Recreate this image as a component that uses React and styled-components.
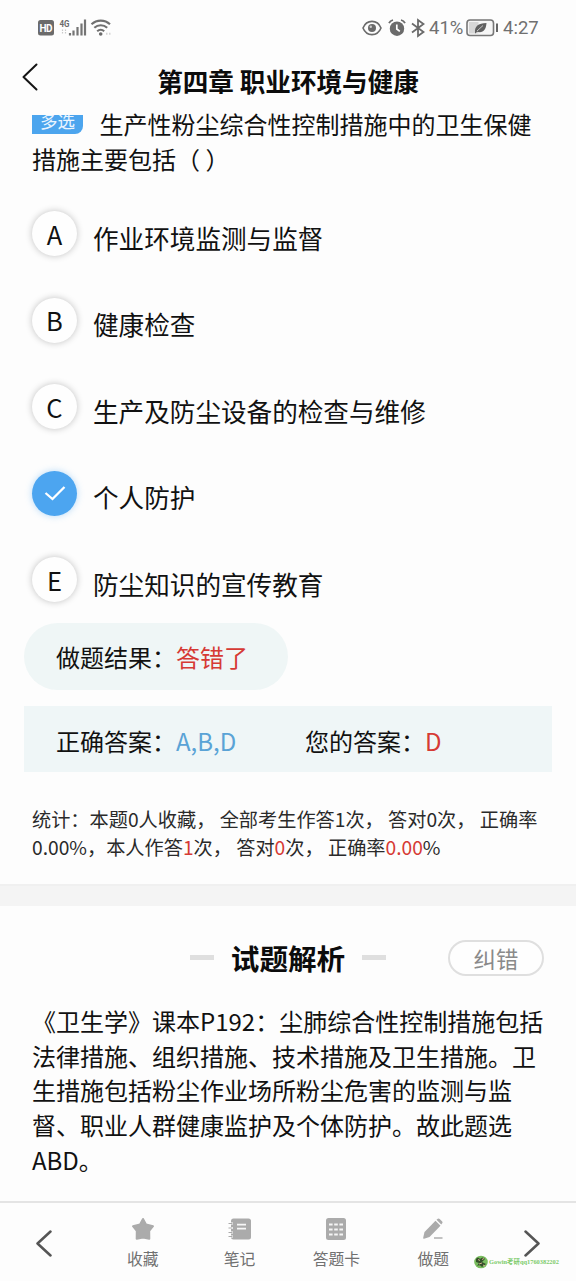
import React from "react";
import styled, { createGlobalStyle } from "styled-components";

const Global = createGlobalStyle`
  * { box-sizing: border-box; }
  body {
    margin: 0;
    background: #fdfdfd;
    color: #111;
    font-family: "Noto Sans CJK SC", sans-serif;
    text-spacing-trim: space-all;
  }
  svg { display: block; flex: none; }
`;

const Screen = styled.div`
  width: 576px;
  height: 1281px;
  display: flex;
  flex-direction: column;
  overflow: hidden;
  background: #fdfdfd;
`;

const StatusBar = styled.div`
  height: 56px;
  padding: 0 38px 0 38px;
  display: flex;
  justify-content: space-between;
  align-items: center;
  color: #707070;
`;

const StatusGroup = styled.div`
  display: flex;
  align-items: center;
  font: 400 18.5px/22px Roboto, sans-serif;
`;

const StatusText = styled.span`
  margin-left: ${(p) => p.$gap}px;
  width: ${(p) => p.$w}px;
  white-space: nowrap;
`;

const Header = styled.header`
  height: 51px;
  flex: none;
  padding: 0 22px;
  display: grid;
  grid-template-columns: 20px 1fr 20px;
  align-items: start;
`;

const BackButton = styled.button`
  border: 0;
  padding: 7px 0 0;
  background: none;
`;

const Title = styled.h1`
  margin: 6px 0 0;
  font-size: 25.6px;
  line-height: 37px;
  font-weight: 700;
  text-align: center;
  white-space: nowrap;
  color: #0c0c0c;
`;

const Content = styled.main`
  height: 1094px;
  display: flex;
  flex-direction: column;
`;

const Question = styled.div`
  padding-left: 32px;
  height: 83.5px;
  flex: none;
  font-size: 24px;
  line-height: 34.5px;
  white-space: nowrap;
`;

const QuestionLine = styled.div`
  display: flex;
  height: 34.5px;
`;

const Badge = styled.span`
  width: 51px;
  height: 27px;
  margin-right: 16.5px;
  background: #4ca5ee;
  color: #eaf5ff;
  border-radius: 8px 0 8px 0;
  font-size: 17.5px;
  line-height: 28px;
  text-align: center;
  clip-path: inset(8px 0 0 0);
`;

const Options = styled.div`
  display: flex;
  flex-direction: column;
  flex: none;
`;

const Option = styled.div`
  height: 86.5px;
  padding-left: 32px;
  display: flex;
  align-items: center;
`;

const Circle = styled.span`
  width: 45px;
  height: 45px;
  border-radius: 50%;
  display: flex;
  align-items: center;
  justify-content: center;
  font-size: 25.5px;
  line-height: 45px;
  padding-bottom: 1px;
  background: ${(p) => (p.$on ? "#4ca5f0" : "#fefefe")};
  box-shadow: 0 0 7px ${(p) => (p.$on ? "rgba(76,165,240,.4)" : "rgba(0,0,0,.24)")};
`;

const OptionText = styled.span`
  margin: 8px 0 0 16px;
  font-size: 25.6px;
  line-height: 38px;
`;

const ResultPill = styled.div`
  margin-left: 24px;
  width: 264px;
  height: 67px;
  flex: none;
  padding-left: 32px;
  border-radius: 34px;
  background: #eff6f6;
  font-size: 24px;
  line-height: 68px;
`;

const AnswerBar = styled.div`
  margin: 16px 24px 0;
  height: 66px;
  flex: none;
  padding-left: 32px;
  display: flex;
  background: #eff6f7;
  font-size: 24px;
  line-height: 69px;
`;

const AnswerCell = styled.div`
  width: 249px;
`;

const Mark = styled.span`
  color: ${(p) => (p.$blue ? "#5aa3d6" : "#d63a34")};
`;

const Stats = styled.div`
  height: 112px;
  flex: none;
  padding: 34px 0 0 32px;
  font-size: 19.2px;
  line-height: 27.8px;
  white-space: pre;
  color: #2a2a2a;
`;

const Band = styled.div`
  height: 21.5px;
  flex: none;
  background: #f4f4f4;
  border-top: 2px solid #f0f0f0;
`;

const AnalysisHead = styled.div`
  height: 98.5px;
  flex: none;
  padding: 6px 32px 0;
  display: grid;
  grid-template-columns: 96px 1fr 96px;
  align-items: center;
`;

const AnalysisTitle = styled.h2`
  grid-column: 2;
  margin: 0;
  display: flex;
  align-items: center;
  justify-content: center;
  gap: 17px;
  font-size: 28.6px;
  line-height: 40px;
  font-weight: 700;
  color: #0c0c0c;
`;

const Dash = styled.span`
  width: 24px;
  height: 5px;
  background: #dfdfdf;
`;

const FixButton = styled.button`
  height: 36px;
  padding: 0;
  border: 2px solid #dfdfdf;
  border-radius: 18px;
  background: #fefefe;
  color: #8a8a8a;
  font: 400 22.4px/32px "Noto Sans CJK SC", sans-serif;
`;

const Analysis = styled.div`
  padding-left: 32px;
  font-size: 24px;
  line-height: 34.7px;
  white-space: nowrap;
`;

const Footer = styled.footer`
  height: 80px;
  flex: none;
  position: relative;
  border-top: 2px solid #e4e4e4;
  padding: 3px 36px 0;
  display: flex;
  align-items: center;
  justify-content: space-between;
`;

const Tabs = styled.nav`
  display: grid;
  grid-template-columns: repeat(4, 96.8px);
`;

const Tab = styled.div`
  display: flex;
  flex-direction: column;
  align-items: center;
  gap: 6px;
  padding-top: 1px;
  color: #707070;
  font-size: 15.8px;
  line-height: 24px;
`;

const Watermark = styled.div`
  position: absolute;
  left: 474px;
  top: 52px;
  display: flex;
  align-items: center;
  gap: 1px;
  color: #7ccb69;
  font: 700 6.4px/14px "Liberation Serif", "Noto Sans CJK SC", serif;
  white-space: nowrap;
`;

const Chevron = ({ w, h, right, color, sw }) => (
  <svg width={w} height={h} viewBox={`0 0 ${w} ${h}`} fill="none" stroke={color} strokeWidth={sw} strokeLinecap="round" strokeLinejoin="round">
    <path d={right ? `M1.5 1.5L${w - 1.5} ${h / 2}L1.5 ${h - 1.5}` : `M${w - 1.5} 1.5L1.5 ${h / 2}L${w - 1.5} ${h - 1.5}`} />
  </svg>
);

const SignalIcons = () => (
  <svg width="76" height="22" viewBox="0 0 76 22">
    <rect x="0" y="3" width="16" height="15.5" rx="2.5" fill="#6b6b6b" />
    <text x="8" y="14.8" textAnchor="middle" fontFamily="Roboto, sans-serif" fontWeight="700" fontSize="10" textLength="13" fill="#fff">HD</text>
    <text x="21.5" y="9.8" fontFamily="Roboto, sans-serif" fontWeight="700" fontSize="9" textLength="10" lengthAdjust="spacingAndGlyphs" fill="#6b6b6b">4G</text>
    <path d="M24.5 12.5v5M27.5 12.5v5" stroke="#c9c9c9" strokeWidth="1.2" strokeDasharray="1.5 1" />
    <path d="M32 16v2.5M35.5 13.5v5M39.5 10v8.5M43.5 6.5v12M47 2.5v16" stroke="#747474" strokeWidth="2.2" />
    <g fill="none" stroke="#707070" strokeWidth="2.1">
      <path d="M53.5 7.3a13.5 13.5 0 0 1 18.5 0" />
      <path d="M56.3 10.8a9.4 9.4 0 0 1 12.9 0" />
      <path d="M59.2 14.2a5.2 5.2 0 0 1 7 0" />
    </g>
    <circle cx="62.7" cy="17" r="1.8" fill="#6b6b6b" />
    <path d="M68 16.8h1.5M71 16.8h1.5" stroke="#d3d3d3" strokeWidth="2" />
  </svg>
);

const EyeIcon = () => (
  <svg width="20" height="22" viewBox="0 0 20 22" fill="none" stroke="#6b6b6b" strokeWidth="1.6">
    <path d="M1 11C4.5 2.2 15.5 2.2 19 11C15.5 19.8 4.5 19.8 1 11Z" />
    <circle cx="10" cy="11" r="4" fill="#6b6b6b" stroke="none" />
    <circle cx="8.8" cy="9.8" r="1.2" fill="#ccc" stroke="none" />
  </svg>
);

const AlarmIcon = () => (
  <svg width="18" height="22" viewBox="0 0 18 22">
    <circle cx="9" cy="11.7" r="7.2" fill="#6b6b6b" />
    <path d="M1 6.2Q2.2 3.7 5 3M17 6.2Q15.8 3.7 13 3" fill="none" stroke="#6b6b6b" strokeWidth="1.8" />
    <path d="M8.8 7.5V12L11.8 14.4" fill="none" stroke="#fff" strokeWidth="1.7" />
  </svg>
);

const BluetoothIcon = () => (
  <svg width="14" height="22" viewBox="0 0 14 22" fill="none" stroke="#6b6b6b" strokeWidth="1.8">
    <path d="M1 6.5L12.5 15L7 19V3L12.5 7L1 15.5" />
  </svg>
);

const BatteryIcon = () => (
  <svg width="33" height="22" viewBox="0 0 33 22">
    <rect x="1" y="3" width="26.5" height="15.5" rx="3" fill="#f6f6f6" stroke="#777" strokeWidth="1.6" />
    <rect x="3" y="5" width="9.5" height="11.5" fill="#d7d7d7" />
    <path d="M9 16C8.5 9 12 6.5 20.5 6C20 13 17 16.5 11 14.8L9.5 16.5Z" fill="#606060" />
    <path d="M11 14L17 8.5" stroke="#ddd" strokeWidth=".8" />
    <path d="M31 6.5v8.5" stroke="#666" strokeWidth="2" />
  </svg>
);

const tabIcons = {
  star: (
    <svg width="24" height="24" viewBox="0 0 24 24" fill="#ababab" stroke="#ababab" strokeWidth="2" strokeLinejoin="round">
      <path d="M12 2L15 7.5L22 9.2L18.2 14L18.3 21.7L12 20.5L5.7 21.7L5.8 14L2 9.2L9 7.5Z" />
    </svg>
  ),
  note: (
    <svg width="24" height="24" viewBox="0 0 24 24">
      <rect x="3" y="1.5" width="20" height="21" rx="2.5" fill="#ababab" />
      <path d="M1 6.5h4M1 11h4M1 15.5h4M1 19.5h4" stroke="#fdfdfd" strokeWidth="2.2" />
      <path d="M0.5 6.5h4M0.5 11h4M0.5 15.5h4M0.5 19.5h4" stroke="#ababab" strokeWidth="1.2" />
      <path d="M9 7.7h9M9 11.7h9" stroke="#f7f7f7" strokeWidth="1.7" />
    </svg>
  ),
  card: (
    <svg width="24" height="24" viewBox="0 0 24 24">
      <rect x="2" y="1" width="20" height="22" rx="2.5" fill="#ababab" />
      <path d="M5 7.5h14M5 12.5h14M5 17.5h14" stroke="#f5f5f5" strokeWidth="1.9" strokeDasharray="3.6 1.6" />
    </svg>
  ),
  pencil: (
    <svg width="24" height="24" viewBox="0 0 24 24" fill="#ababab">
      <path d="M3.5 15L14.5 3.8L19.5 8.8L8.5 20L3 21.8Q2 22 2.2 20.8Z" />
      <path d="M15.5 2.8L16.8 1.7Q17.8 1 18.7 1.9L21.2 4.5Q22 5.4 21.2 6.3L20.2 7.5Z" />
      <rect x="13" y="20" width="8.5" height="2" fill="#c2c2c2" />
    </svg>
  ),
};

const WatermarkLogo = () => (
  <svg width="14" height="14" viewBox="0 0 14 14">
    <ellipse cx="7" cy="7" rx="6.8" ry="6.3" fill="#79bd5e" />
    <path d="M2 4Q4 1 6 4Q9 1 11 4L8 7L12 9L8 12Q6 9 3 11L5 8L2 7Z" fill="#34502b" />
    <path d="M4 4.5l2 1M8 4.5l2-1M5 9l3-1M9 10l2 1" stroke="#d5b08c" strokeWidth="1" />
  </svg>
);

const options = [
  ["A", "作业环境监测与监督"],
  ["B", "健康检查"],
  ["C", "生产及防尘设备的检查与维修"],
  ["D", "个人防护", true],
  ["E", "防尘知识的宣传教育"],
];

const analysis = [
  "《卫生学》课本P192：尘肺综合性控制措施包括",
  "法律措施、组织措施、技术措施及卫生措施。卫",
  "生措施包括粉尘作业场所粉尘危害的监测与监",
  "督、职业人群健康监护及个体防护。故此题选",
  "ABD。",
];

const tabs = [
  ["star", "收藏"],
  ["note", "笔记"],
  ["card", "答题卡"],
  ["pencil", "做题"],
];

export default function App() {
  return (
    <>
      <Global />
      <Screen>
        <StatusBar>
          <SignalIcons />
          <StatusGroup>
            <EyeIcon />
            <StatusText $gap={6} $w={18}><AlarmIcon /></StatusText>
            <StatusText $gap={5} $w={14}><BluetoothIcon /></StatusText>
            <StatusText $gap={4} $w={33}>41%</StatusText>
            <StatusText $gap={4} $w={33}><BatteryIcon /></StatusText>
            <StatusText $gap={4} $w={35}>4:27</StatusText>
          </StatusGroup>
        </StatusBar>
        <Header>
          <BackButton aria-label="返回">
            <Chevron w={16} h={28} color="#151515" sw={2} />
          </BackButton>
          <Title>第四章 职业环境与健康</Title>
        </Header>
        <Content>
          <Question>
            <QuestionLine>
              <Badge>多选</Badge>
              <span>生产性粉尘综合性控制措施中的卫生保健</span>
            </QuestionLine>
            <QuestionLine>措施主要包括（ ）</QuestionLine>
          </Question>
          <Options>
            {options.map(([key, text, on]) => (
              <Option key={key}>
                <Circle $on={on}>
                  {on ? (
                    <svg width="22" height="18" viewBox="0 0 22 18" fill="none" stroke="#fff" strokeWidth="2.3">
                      <path d="M1.5 9L8.5 15L20.5 3" />
                    </svg>
                  ) : key}
                </Circle>
                <OptionText>{text}</OptionText>
              </Option>
            ))}
          </Options>
          <ResultPill>做题结果：<Mark>答错了</Mark></ResultPill>
          <AnswerBar>
            <AnswerCell>正确答案：<Mark $blue>A,B,D</Mark></AnswerCell>
            <div>您的答案：<Mark>D</Mark></div>
          </AnswerBar>
          <Stats>
            <div>统计：本题0人收藏， 全部考生作答1次， 答对0次， 正确率</div>
            <div>0.00%，本人作答<Mark>1</Mark>次， 答对<Mark>0</Mark>次， 正确率<Mark>0.00</Mark>%</div>
          </Stats>
          <Band />
          <AnalysisHead>
            <AnalysisTitle><Dash />试题解析<Dash /></AnalysisTitle>
            <FixButton>纠错</FixButton>
          </AnalysisHead>
          <Analysis>
            {analysis.map((line) => <div key={line}>{line}</div>)}
          </Analysis>
        </Content>
        <Footer>
          <Chevron w={16} h={27} color="#555" sw={2.5} />
          <Tabs>
            {tabs.map(([icon, label]) => (
              <Tab key={icon}>{tabIcons[icon]}<span>{label}</span></Tab>
            ))}
          </Tabs>
          <Chevron w={16} h={27} right color="#555" sw={2.5} />
          <Watermark><WatermarkLogo />Gowin考研qq1760382202</Watermark>
        </Footer>
      </Screen>
    </>
  );
}
